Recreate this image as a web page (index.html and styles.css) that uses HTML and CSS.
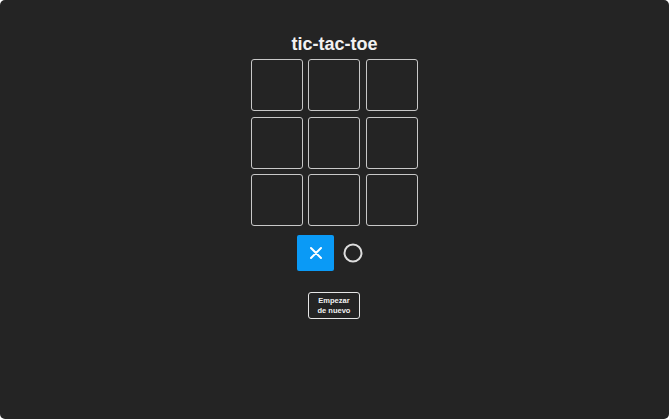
FILE: index.html
```html
<!DOCTYPE html>
<html lang="es">
<head>
<meta charset="utf-8">
<title>tic-tac-toe</title>
<link rel="stylesheet" href="styles.css">
</head>
<body>
<main class="app">
  <h1 class="title">tic-tac-toe</h1>
  <section class="board">
    <div class="cell"></div><div class="cell"></div><div class="cell"></div>
    <div class="cell"></div><div class="cell"></div><div class="cell"></div>
    <div class="cell"></div><div class="cell"></div><div class="cell"></div>
  </section>
  <section class="turn">
    <div class="turn-item active">
      <svg width="14" height="14" viewBox="0 0 14 14"><path d="M2 2 L12 12 M12 2 L2 12" stroke="#fff" stroke-width="2" stroke-linecap="round"/></svg>
    </div>
    <div class="turn-item">
      <svg width="22" height="22" viewBox="0 0 22 22"><circle cx="11" cy="11" r="8.5" fill="none" stroke="#ddd" stroke-width="2"/></svg>
    </div>
  </section>
  <button class="reset">Empezar<br>de nuevo</button>
</main>
</body>
</html>
```
FILE: styles.css
```css
html, body { margin: 0; padding: 0; background: #fff; }
.app {
  height: 419px;
  background: #242424;
  border-radius: 5px;
  display: flex;
  flex-direction: column;
  align-items: center;
  box-sizing: border-box;
  padding-top: 34px;
  font-family: "Liberation Sans", Arial, sans-serif;
  color: #f0f0f0;
}
.title {
  margin: 0 0 4px;
  font-size: 18px;
  line-height: 21px;
  font-weight: 700;
  color: #f2f2f2;
}
.board {
  display: grid;
  grid-template-columns: repeat(3, 52px);
  grid-auto-rows: 52px;
  gap: 5.5px;
  margin-left: -1px;
}
.cell {
  border: 1.5px solid #c8c8c8;
  border-radius: 3px;
  box-sizing: border-box;
}
.turn {
  display: flex;
  gap: 0;
  margin-top: 9px;
  margin-left: -1px;
}
.turn-item {
  width: 37px;
  height: 36px;
  border-radius: 2px;
  display: flex;
  align-items: center;
  justify-content: center;
}
.turn-item.active { background: #0a9af6; }
.reset {
  margin-top: 21px;
  width: 52px;
  height: 27px;
  padding: 0;
  background: #242424;
  color: #f2f2f2;
  border: 1px solid #e6e6e6;
  border-radius: 3px;
  font-family: "Liberation Sans", Arial, sans-serif;
  font-size: 7.5px;
  font-weight: 700;
  line-height: 10px;
  margin-left: -1px;
}
```
